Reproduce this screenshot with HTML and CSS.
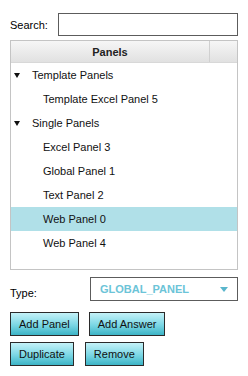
FILE: index.html
```html
<!DOCTYPE html>
<html>
<head>
<meta charset="utf-8">
<link rel="stylesheet" href="styles.css">
</head>
<body>
<div class="app">
  <div class="search-row">
    <label class="search-label">Search:</label>
    <input class="search-input" type="text">
  </div>
  <div class="tree">
    <div class="tree-head">
      <div class="head-main">Panels</div>
      <div class="head-side"></div>
    </div>
    <div class="tree-body">
      <div class="row group"><span class="caret"></span>Template Panels</div>
      <div class="row child">Template Excel Panel 5</div>
      <div class="row group"><span class="caret"></span>Single Panels</div>
      <div class="row child">Excel Panel 3</div>
      <div class="row child">Global Panel 1</div>
      <div class="row child">Text Panel 2</div>
      <div class="row child selected">Web Panel 0</div>
      <div class="row child">Web Panel 4</div>
    </div>
  </div>
  <div class="type-row">
    <span class="type-label">Type:</span>
    <div class="select">
      <span class="select-value">GLOBAL_PANEL</span>
      <span class="select-arrow"></span>
    </div>
  </div>
  <div class="btn-row">
    <button class="btn">Add Panel</button>
    <button class="btn">Add Answer</button>
  </div>
  <div class="btn-row second">
    <button class="btn">Duplicate</button>
    <button class="btn">Remove</button>
  </div>
</div>
</body>
</html>
```

FILE: styles.css
```css
html, body {
  margin: 0;
  padding: 0;
  background: #ffffff;
}
body {
  font-family: "Liberation Sans", Arial, sans-serif;
  font-size: 11px;
  color: #000;
}
.app {
  width: 228px;
  padding: 13px 10px 0 10px;
}
.search-row {
  display: flex;
  align-items: center;
  height: 23px;
}
.search-label {
  width: 48px;
  font-size: 11px;
}
.search-input {
  flex: 1;
  height: 23px;
  box-sizing: border-box;
  border: 1px solid #5c5c5c;
  margin: 0;
  padding: 0 4px;
  font: inherit;
  outline: none;
}
.tree {
  margin-top: 4px;
  height: 230px;
  box-sizing: border-box;
  border: 1px solid #c4c4c4;
  display: flex;
  flex-direction: column;
}
.tree-head {
  display: flex;
  height: 22px;
  background: linear-gradient(#f6f6f6, #e1e1e1);
  border-bottom: 1px solid #d8d8d8;
  box-sizing: border-box;
}
.head-main {
  flex: 1;
  display: flex;
  align-items: center;
  justify-content: center;
  font-weight: bold;
  color: #222;
}
.head-side {
  width: 27px;
  border-left: 1px solid #d0d0d0;
}
.tree-body {
  flex: 1;
}
.row {
  height: 24px;
  display: flex;
  align-items: center;
  white-space: nowrap;
  color: #111;
}
.row.group {
  padding-left: 3px;
}
.row.child {
  padding-left: 32px;
}
.row.selected {
  background: #b0e0e8;
}
.caret {
  width: 0;
  height: 0;
  border-left: 3px solid transparent;
  border-right: 3px solid transparent;
  border-top: 5px solid #111;
  margin-right: 12px;
}
.type-row {
  display: flex;
  align-items: flex-end;
  margin-top: 7px;
}
.type-label {
  width: 80px;
  padding-bottom: 2px;
}
.select {
  flex: 1;
  height: 24px;
  box-sizing: border-box;
  border: 1px solid #5c5c5c;
  display: flex;
  align-items: center;
  justify-content: space-between;
  padding: 0 9px 0 9px;
}
.select-value {
  font-weight: bold;
  color: #6cc4d8;
}
.select-arrow {
  width: 0;
  height: 0;
  border-left: 4px solid transparent;
  border-right: 4px solid transparent;
  border-top: 5px solid #5ab6cc;
}
.btn-row {
  display: flex;
  gap: 10px;
  margin-top: 11px;
}
.btn-row.second {
  margin-top: 6px;
  gap: 11px;
}
.btn {
  height: 24px;
  box-sizing: border-box;
  border: 1px solid #2a2a2a;
  border-radius: 0;
  padding: 0 8px;
  margin: 0;
  font-family: "Liberation Sans", Arial, sans-serif;
  font-size: 11px;
  color: #111;
  background: linear-gradient(#c4f2f8, #7ad6e4 55%, #3cb4c6);
}
```
